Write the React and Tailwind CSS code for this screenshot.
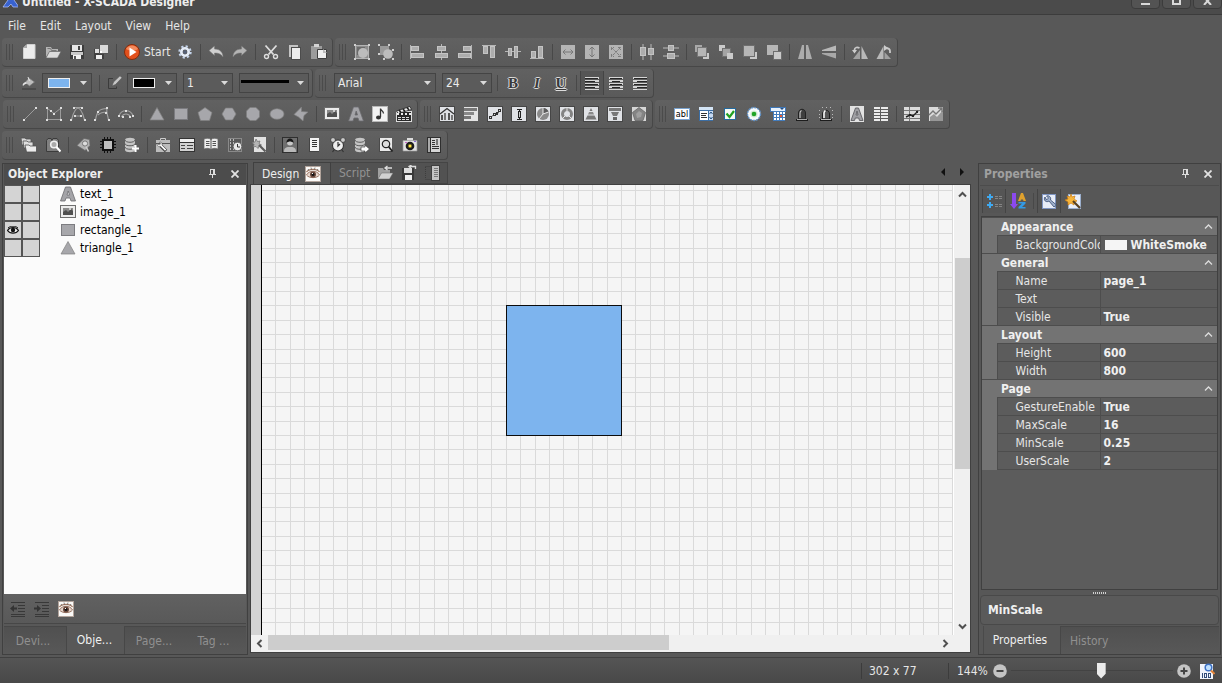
import React from "react";

const R = ({ x, y, w, h, f = "#b6b6b6", s }) => (
  <rect x={x} y={y} width={w} height={h} fill={f} stroke={s} shapeRendering="crispEdges" />
);
const P = ({ d, f = "none", s, w = 1, crisp, dash }) => (
  <path d={d} fill={f} stroke={s} strokeWidth={w} strokeDasharray={dash} shapeRendering={crisp ? "crispEdges" : undefined} />
);
const Dots = ({ pts, f = "#dedede" }) => pts.map(([x, y]) => <R key={x + "-" + y} x={x} y={y} w={2} h={2} f={f} />);
const Block = ({ x, y, w, h }) => (
  <>
    <R x={x} y={y} w={w} h={h} f="#c4c4c4" />
    <R x={x + 1} y={y + 1} w={w - 2} h={h - 2} f="#adadad" />
  </>
);
const Tile = ({ children }) => (
  <>
    <R x={0} y={0} w={16} h={16} f="#464646" />
    <R x={1} y={1} w={14} h={14} f="#e0e2e6" />
    {children}
  </>
);
const G = "#a0a0a0";
const A = "#a7a7ab";

const icons = {
  newFile: <><P d="M6 .5h8v14H2.500V4z" f="#ececec" s="#d0d0d0" /><P d="M6 .5V4H2.500z" f="#a8a8a8" /></>,
  open: <><P d="M1 13V3h5l1 2h6v2H5z" f="#b5b5b5" /><P d="M1 14L4.500 7.500H16L12.500 14z" f="#dcdcdc" s="#666" w={0.6} /><P d="M2.500 4.500h3l1 2h5" s="#777" /></>,
  save: <><R x={1} y={1} w={14} h={14} f="#3c3c3c" /><R x={3} y={1} w={10} h={6} f="#e6e6e6" /><R x={9} y={2} w={2} h={4} f="#444" /><R x={2} y={8} w={12} h={3} f="#c9c9c9" /><R x={4} y={11} w={8} h={4} f="#f2f2f2" /><R x={5} y={12} w={2} h={3} f="#555" /></>,
  saveAll: <><R x={1} y={5} w={10} h={10} f="#404040" /><R x={2} y={5} w={7} h={4} f="#ddd" /><R x={3} y={11} w={6} h={4} f="#eee" /><R x={6} y={1} w={9} h={9} f="#555" /><R x={7} y={1} w={8} h={8} f="#d9d9d9" /><R x={7} y={7} w={2} h={2} f="#fff" /></>,
  start: <><circle cx="8" cy="8" r="7.500" fill="#e2501c" stroke="#842c0c" /><path d="M2 5a7 7 0 0 1 12 0c-3 2-8 2-12 0z" fill="#f38a5d" /><path d="M5.500 3.500v9L12.500 8z" fill="#fff" /></>,
  gear: <><circle cx="8" cy="8" r="5.700" fill="none" stroke="#c4d4ec" strokeWidth="2" strokeDasharray="2.200 2.270" /><circle cx="8" cy="8" r="3.700" fill="none" stroke="#e4ecf8" strokeWidth="2.600" /><circle cx="8" cy="8" r="1.800" fill="#55617a" /></>,
  undo: <P d="M1 6.500L6.500 2v3C12 5 15 8.500 15 13c-2-3-4-4-8.500-4v2.500z" f="#cfcfcf" s="#777" w={0.5} />,
  redo: <P d="M15 6.500L9.500 2v3C4 5 1 8.500 1 13c2-3 4-4 8.500-4v2.500z" f="#b4b4b4" s="#777" w={0.5} />,
  cut: <><P d="M2.500 1.500l8 9M13.500 1.500l-8 9" s="#dedede" w={1.8} /><circle cx="3.500" cy="12.500" r="2" fill="none" stroke="#dedede" strokeWidth="1.400" /><circle cx="12.500" cy="12.500" r="2" fill="none" stroke="#dedede" strokeWidth="1.400" /></>,
  copy: <><R x={2} y={1} w={9} h={12} f="#c4c4c4" /><R x={4} y={3} w={10} h={13} f="#4c4c4c" /><R x={5} y={4} w={8} h={11} f="#ededed" /></>,
  paste: <><R x={0} y={2} w={11} h={13} f="#9c9c9c" /><R x={3} y={0} w={5} h={3} f="#d4d4d4" /><P d="M6.500 5.500h9v9h-9z" f="#efefef" s="#3e3e3e" /><P d="M12 5v4h4z" f="#bbb" /></>,
  group: <><P d="M1.500 1.500h13v13h-13z" f="#8c8c8c" s="#b4b4b4" /><R x={3} y={3} w={8} h={8} f="#6a6a6a" /><circle cx="9" cy="9" r="5" fill="#bcbcbc" /><Dots pts={[[0, 0], [14, 0], [0, 14], [14, 14]]} f="#d0d0d0" /></>,
  ungroup: <><R x={2} y={2} w={9} h={9} f="#9a9a9a" /><circle cx="10" cy="10" r="4.800" fill="#bcbcbc" /><Dots pts={[[0, 0], [10, 0], [0, 9], [5, 14], [14, 5], [14, 14]]} f="#d0d0d0" /></>,
  alL: <><R x={1} y={1} w={1} h={14} /><Block x={2} y={2} w={8} h={5} /><Block x={2} y={9} w={13} h={5} /></>,
  alC: <><R x={8} y={0} w={1} h={16} /><Block x={4} y={2} w={9} h={5} /><Block x={2} y={9} w={13} h={5} /></>,
  alR: <><R x={14} y={1} w={1} h={14} /><Block x={6} y={2} w={8} h={5} /><Block x={1} y={9} w={13} h={5} /></>,
  alT: <><R x={1} y={1} w={14} h={1} /><Block x={2} y={2} w={5} h={8} /><Block x={9} y={2} w={5} h={12} /></>,
  alM: <><R x={0} y={7} w={16} h={1} /><Block x={3} y={4} w={4} h={8} /><Block x={9} y={2} w={4} h={12} /></>,
  alB: <><R x={1} y={14} w={14} h={1} /><Block x={2} y={7} w={5} h={7} /><Block x={9} y={2} w={5} h={12} /></>,
  sameW: <><R x={1} y={1} w={14} h={14} f="#b4b4b4" /><P d="M3 8h10M5.500 5.500L3 8l2.500 2.500M10.500 5.500L13 8l-2.500 2.500" s="#777" /></>,
  sameH: <><R x={1} y={1} w={14} h={14} f="#b4b4b4" /><P d="M8 3v10M5.500 5.500L8 3l2.500 2.500M5.500 10.500L8 13l2.500-2.500" s="#777" /></>,
  sameB: <><R x={1} y={1} w={14} h={14} f="#b4b4b4" /><P d="M3.500 6V3.500H6M10 3.500h2.500V6M3.500 10v2.500H6M10 12.500h2.500V10M3.500 3.500l9 9M12.500 3.500l-9 9" s="#7c7c7c" dash="3 1" /></>,
  distH: <><R x={3} y={0} w={2} h={16} f="#8c8c8c" /><R x={11} y={0} w={2} h={16} f="#8c8c8c" /><Block x={1} y={3} w={6} h={9} /><Block x={9} y={4} w={6} h={7} /></>,
  distV: <><R x={0} y={3} w={16} h={2} f="#8c8c8c" /><R x={0} y={11} w={16} h={2} f="#8c8c8c" /><Block x={5} y={1} w={6} h={6} /><Block x={4} y={9} w={8} h={6} /></>,
  z1: <><R x={1} y={1} w={7} h={7} f="#a8a8a8" /><R x={9} y={9} w={6} h={6} f="#c9c9c9" /><R x={3} y={3} w={9} h={9} s="#777" /></>,
  z2: <><R x={1} y={1} w={6} h={6} f="#cacaca" /><R x={4} y={4} w={8} h={8} f="#a4a4a4" s="#707070" /><R x={9} y={9} w={6} h={6} f="#cacaca" /></>,
  z3: <><R x={8} y={8} w={7} h={7} f="#cacaca" /><R x={1} y={1} w={11} h={11} s="#6e6e6e" /></>,
  z4: <><R x={1} y={1} w={11} h={10} /><R x={7} y={7} w={8} h={8} f="#cacaca" s="#6e6e6e" /></>,
  flipH: <><P d="M7 1v14H1L5 1z" f="#acacac" /><P d="M9 1v14h6L11 1z" f="#acacac" /></>,
  flipV: <><P d="M15 1.500v5.500H1V6z" f="#b8b8b8" /><P d="M15 14.500V9H1v1z" f="#a8a8a8" /></>,
  rotL: <><P d="M8 6v9H1z" f="#a0a0a0" /><P d="M9.500 2v13H16z" f="#b8b8b8" /><P d="M2.500 8V6c0-3 3-3 5-2" s="#c9c9c9" w={1.8} /><P d="M0 6h5L2.500 9.500z" f="#ccc" /></>,
  rotR: <><P d="M7.500 2v13H.5z" f="#b8b8b8" /><P d="M8.500 8v7H15z" f="#a0a0a0" /><P d="M14 9V7c0-3-3-3-5-3" s="#c9c9c9" w={1.8} /><P d="M8 1v6l4-3z" f="#ccc" /></>,
  bucket: <><P d="M8 3l5.500 4-5 4L4 7.500z" f="#bdbdbd" s="#777" w={0.7} /><P d="M4.500 7c-3 1-3 3-2.500 4 1-1 2-2 4-2.500z" f="#e4e4e4" /><P d="M7 2l1.500 4" s="#e4e4e4" /><R x={1} y={13} w={14} h={2} f="#4b4b4b" /></>,
  pen: <><P d="M6 3.500H1.500v10h8v-2" s="#3b3b3b" /><P d="M5 11l1.500-4L13 .8l2 2L8.500 9.500z" f="#c6c6c6" s="#555" w={0.6} /></>,
  line: <><P d="M2 14L14 2" s="#9b9b9b" /><Dots pts={[[1, 13], [13, 1]]} /></>,
  polyline: <><P d="M1.500 2.500v11h13v-11L8 7.500z" s="#9b9b9b" /><Dots pts={[[0, 1], [14, 1], [7, 7], [0, 13], [14, 13], [4, 4]]} /></>,
  curve: <><P d="M1.500 14C3 9 4 3 8 2c4 1 5 7 6.500 12M4 10h8M3 1.500h10" s={G} w={1.2} /><Dots pts={[[0, 13], [14, 13], [3, 1], [11, 1], [4, 9], [10, 9]]} /></>,
  curve2: <><P d="M1.500 14C3 4 6 3 13 2.500 12 6 14 10 14.500 14M4 9c3-3 6-3 9-3" s={G} w={1.2} /><Dots pts={[[0, 13], [14, 13], [12, 1], [3, 5], [11, 6]]} /></>,
  arc: <><P d="M1 10c2-7 12-7 14 0M3.500 11c2-4 7-4 9 0" s={G} w={1.2} /><Dots pts={[[0, 9], [14, 9], [4, 10], [11, 10], [7, 4]]} /></>,
  tri: <P d="M8 1.500L15 14H1z" f={A} s="#808080" w={0.7} />,
  rect: <><R x={1} y={2} w={14} h={12} f="#7c7c80" /><R x={2} y={3} w={12} h={10} f={A} /></>,
  pent: <P d="M8 1.500L15 6.500l-2.500 8h-9L1 6.500z" f={A} s="#808080" w={0.7} />,
  hex: <P d="M4.500 2h7L15 8l-3.500 6h-7L1 8z" f={A} s="#808080" w={0.7} />,
  oct: <P d="M5 1.500h6l3.500 3.500v6L11 14.500H5L1.500 11V5z" f={A} s="#808080" w={0.7} />,
  ell: <ellipse cx="8" cy="8" rx="7" ry="5.300" fill={A} stroke="#808080" strokeWidth="0.700" />,
  freeform: <P d="M1 8.500L8.500 1v4.500L15 6l-4 3.500L10 15 5.500 11z" f={A} s="#808080" w={0.7} />,
  image: <><R x={0} y={1} w={16} h={13} f="#6e6e6e" /><R x={1} y={2} w={14} h={11} f="#ececec" /><R x={3} y={4} w={10} h={7} f="#8a8a8a" /><P d="M3 11V8l3-2 2 2 3-3 2 2v4z" f="#4f4f4f" /><R x={9} y={4} w={2} h={2} f="#ccc" /></>,
  text: <P d="M5.500 1h5l5 14h-4.500l-1-3H6l-1 3H.5zM7 9h2.500L8.200 5z" f="#a4a4a8" s="#6b6b6f" w={0.8} />,
  music: <><R x={0} y={0} w={16} h={16} f="#b8b8b8" /><R x={1} y={1} w={14} h={14} f="#f2f2f2" /><P d="M8.500 11V2.500c0 2 3 2 3 5" s="#333" w={1.3} /><ellipse cx="6.500" cy="11.500" rx="2.500" ry="1.900" fill="#333" /></>,
  movie: <><R x={0} y={5} w={16} h={11} f="#ddd" /><R x={1} y={6} w={14} h={9} f="#292929" /><P d="M.5 5L14 .5l1.500 3L2 7.500z" f="#eee" s="#222" w={0.8} /><P d="M3 4l2 2.500M7 3l2 2.500M11 1.500l2 2.500" s="#222" w={1.6} /><P d="M1 8h14" s="#eee" w={2} dash="2 2" /><P d="M2 11.500h12M2 13.500h12" s="#ddd" dash="3 1" /></>,
  cBar: <Tile><P d="M1 8l7-5.500L15 8" s="#333" w={1.3} /><R x={2} y={9} w={2} h={5} f="#555" /><R x={5} y={7} w={2} h={7} f="#777" /><R x={9} y={7} w={2} h={7} f="#555" /><R x={12} y={9} w={2} h={5} f="#777" /></Tile>,
  cHbar: <><R x={1} y={1} w={14} h={14} f="#e4e4e4" /><R x={1} y={2} w={13} h={3} f="#777" /><R x={1} y={6} w={10} h={3} f="#888" /><R x={1} y={10} w={7} h={3} f="#777" /></>,
  cLine: <Tile><P d="M3.500 11.500L7 8.500h3L13 4" s="#555" /><P d="M2.500 10.500h2v2h-2zM6.500 7.500h2v2h-2zM9.500 6.500h1v2h-1zM11.500 3.500h2v2h-2z" f="#ddd" s="#333" crisp /></Tile>,
  cBox: <Tile><P d="M8.500 3v11M6 3.500h5M6 13.500h5" s="#222" crisp /><R x={7} y={5} w={3} h={7} f="#222" /><R x={8} y={6} w={1} h={5} f="#ccc" /></Tile>,
  cPie: <Tile><circle cx="8" cy="8" r="6" fill="#8a8a8a" /><P d="M8 8V2a6 6 0 0 1 5.500 4z" f="#5c5c5c" /><P d="M8 2v6l5.500-2M8 8l-4 5" s="#e8e8e8" /></Tile>,
  cDonut: <Tile><circle cx="8" cy="8" r="4.500" fill="none" stroke="#838383" strokeWidth="3" /><P d="M8 1v4M3 13l3-3M13 13l-3-3" s="#e8e8e8" /></Tile>,
  cPyr: <Tile><P d="M8 2l1.500 3h-3z" f="#777" /><P d="M6 6h4l1 2.500H5z" f="#8a8a8a" /><P d="M4.500 9.500h7l2 4h-11z" f="#777" /></Tile>,
  cFun: <Tile><R x={2} y={2} w={12} h={3} f="#777" /><P d="M4 6h8l-2 4H6z" f="#777" /><R x={6} y={11} w={4} h={3} f="#666" /></Tile>,
  cRad: <><R x={1} y={1} w={14} h={14} f="#d6d6d6" /><P d="M8 1.500l6.500 5-2.500 8H4l-2.500-8z" f="#858585" s="#666" w={0.8} /><P d="M8 5l3 2-1 4-4 1-1-4z" f="#a0a0a0" /></>,
  combo: <><R x={1} y={1} w={14} h={14} f="#3c6ea4" /><R x={1} y={1} w={14} h={3} f="#d4e5f6" /><R x={2} y={5} w={8} h={9} f="#fff" /><R x={3} y={7} w={6} h={1} f="#333" /><R x={3} y={9} w={5} h={1} f="#333" /><R x={3} y={11} w={6} h={1} f="#333" /><R x={11} y={5} w={4} h={9} f="#c8dbf4" /><P d="M11.500 8L13 6l1.500 2M11.500 11l1.500 2 1.500-2" s="#24507e" /></>,
  check: <><R x={2} y={2} w={12} h={12} f="#246a9f" /><R x={3} y={3} w={10} h={10} f="#f7faf5" /><P d="M4.500 7.500l3 3.500 4.500-6" s="#21a121" w={2.2} /></>,
  radio: <><circle cx="8" cy="8" r="6.500" fill="#f7fbff" stroke="#5f8fc2" strokeDasharray="2 1" strokeWidth="1.400" /><circle cx="8" cy="8" r="3.600" fill="#d2ecd2" /><circle cx="8" cy="8" r="2.300" fill="#1fa528" /></>,
  date: <><R x={0} y={1} w={15} h={4} f="#e7f1fd" s="#3f77b7" /><P d="M10 2h4l-2 2z" f="#274e80" /><R x={3} y={5} w={12} h={10} f="#447dbd" /><g>{[6, 9, 12].map((y) => [4, 7, 10, 13].map((x) => <R key={x + "," + y} x={x} y={y} w={2} h={2} f={x === 10 && y === 9 ? "#e95a33" : "#fff"} />))}</g></>,
  lamp: <><P d="M4.500 13V7c0-5 7-5 7 0v6z" f="#3f3f3f" s="#222" /><P d="M6 12V7c0-1 .5-2 1.500-2.500" s="#ccc" w={1.1} /><R x={2} y={13} w={12} h={2} f="#1d1d1d" /><R x={3} y={13} w={10} h={1} f="#aaa" /></>,
  lampOn: <><P d="M4.500 13V8c0-5 7-5 7 0v5z" f="#555" s="#1d1d1d" /><P d="M6 12V7c0-1 .5-2 1.500-2.500" s="#fff" w={1.5} /><R x={2} y={13} w={12} h={2} f="#1d1d1d" /><R x={3} y={13} w={10} h={1} f="#bbb" /><P d="M1 4h1M1 8h1M1 11h1M14 4h1M14 8h1M14 11h1M4 1h1M8 1h1M12 1h1" s="#bbb" crisp /></>,
  textTile: <><R x={1} y={0} w={14} h={16} f="#e2e2e2" /><P d="M6.500 2h3L14 14.500h-3.500L9.700 12H6.300l-.8 2.500H2zM7 9h2L8 5z" f="#a0a0a4" s="#5f5f63" w={0.9} /></>,
  grid: <g>{[1, 4, 7, 10, 13].map((y) => <g key={y}><R x={1} y={y} w={6} h={2} f="#ececec" /><R x={8} y={y} w={7} h={2} f="#ececec" /></g>)}</g>,
  trendGrid: <><R x={0} y={1} w={16} h={14} f="#dcdcdc" /><P d="M0 4.500h16M0 8.500h16M0 12.500h16M5.500 1v14" s="#777" crisp /><P d="M2 11l4-2 3 1 5-5" s="#222" w={1.4} /><Dots pts={[[5, 8], [8, 9], [12, 5]]} f="#222" /></>,
  trend: <><R x={1} y={1} w={14} h={14} f="#dcdcdc" /><P d="M2 15v-4l4-3 3 3 6-7v11z" f="#979797" /><P d="M1 9l4-4 3 3 6-6M10 2h4v4" s="#777" w={1.4} /></>,
  layers: <><P d="M0 1h4l1 1h5v6H1z" f="#d8d8d8" s="#505050" w={0.8} /><P d="M2 4h4l1 1h5v6H3z" f="#dedede" s="#505050" w={0.8} /><P d="M4 8h4l1 1h6.500v6H5.500z" f="#ececec" s="#505050" w={0.8} /></>,
  findObj: <><P d="M1.500 14.500v-11L3 1.500h3l1 2 1-2h4l1.500 2v11z" f="#808080" s="#3c3c3c" /><circle cx="9" cy="7.500" r="3.300" fill="#aaa" stroke="#f0f0f0" strokeWidth="1.600" /><P d="M11.500 10l4 4.500" s="#fff" w={2.2} /></>,
  tag: <><P d="M1 8.500L8 1.500l5.500 1 .5 6-5 5z" f="#b3b3b3" s="#666" w={0.7} /><circle cx="9" cy="6.500" r="2.600" fill="#dcdcdc" stroke="#777" /><P d="M10 9.500l2.500 5" s="#ccc" w={1.6} /></>,
  chip: <><P d="M4.500 0v16M7.500 0v16M10.500 0v16M0 4.500h16M0 7.500h16M0 10.500h16" s="#111" crisp /><R x={2} y={2} w={12} h={12} f="#111" /><R x={4} y={4} w={8} h={8} f="#bfbfbf" /></>,
  dbAdd: <><P d="M1 3c0-3 10-3 10 0v10c0 3-10 3-10 0z" f="#c5c5c5" /><P d="M1 3c0 3 10 3 10 0M1 6.500c0 3 10 3 10 0M1 10c0 3 10 3 10 0" s="#5c5c5c" /><P d="M8 11.500h7M11.500 8v7" s="#fff" w={2} /></>,
  toolbox: <><P d="M5.500 3.500v-2h5v2" s="#ccc" /><R x={1} y={3} w={14} h={12} f="#bcbcbc" /><R x={1} y={6} w={14} h={1} f="#555" /><P d="M5 8l6 6" s="#444" w={3.4} /><P d="M2 6.500c0 3 2 3.500 3.500 3L10 14l1.500-1.500L7 8c.5-2-.5-3-2.500-3l1 2L4 8z" f="#f4f4f4" s="#444" w={0.5} /></>,
  form: <><R x={0} y={1} w={16} h={14} f="#333" /><R x={1} y={2} w={14} h={3} f="#eee" /><R x={1} y={6} w={14} h={8} f="#d2d2d2" /><P d="M2 8.500h4M2 11.500h4M8 8.500h6M8 11.500h6" s="#444" crisp /></>,
  book: <><P d="M1 2c3-1 5-1 7 .5C10 1 12 1 15 2v10c-3-1-5-1-7 .5C6 11 4 11 1 12z" f="#eee" s="#666" w={0.7} /><P d="M8 2v11M3 4.500h3.500M3 6.500h3.500M3 8.500h3.500M9.500 4.500H13M9.500 6.500H13M9.500 8.500H13" s="#555" /></>,
  schedule: <><R x={1} y={1} w={14} h={14} f="#8a8a8a" /><R x={2} y={2} w={12} h={12} f="#5a5a5a" /><P d="M3.500 2v12M6.500 2v12" s="#bbb" dash="2 1" /><circle cx="10.500" cy="9.500" r="4.300" fill="#eaeaea" stroke="#666" /><P d="M10.500 7v3h2.500" s="#333" /></>,
  script: <><R x={3} y={0} w={12} h={15} f="#e2e2e2" /><P d="M5 2l1.500 2.500L9 4 8 6.500l2.500 1.500-2.500 1L7 11.500 5 9.500 2 10l1-2.500L1 5.500 4 5z" f="#b4b4b4" s="#6a6a6a" w={0.7} /><P d="M8 8l6.500 6.500" s="#5c5c5c" w={2.2} /></>,
  user: <><R x={0} y={0} w={16} h={16} f="#2f2f2f" /><R x={1} y={1} w={14} h={14} f="#6f6f6f" /><circle cx="8" cy="5.500" r="3" fill="#c9c9c9" /><P d="M4.500 6c-.5-6 7.500-6 7 0-2-2-5-2-7 0z" f="#161616" /><P d="M2 15c0-5 3-5 6-5s6 0 6 5z" f="#b9b9b9" /></>,
  log: <><R x={3} y={1} w={10} h={14} f="#444" /><R x={4} y={1} w={9} h={13} f="#f2f2f2" /><P d="M6 3.500h5M6 5.500h5M6 7.500h5M6 9.500h5" s="#333" crisp /></>,
  alarm: <><circle cx="8" cy="8.500" r="5.500" fill="#eee" stroke="#333" strokeWidth="1.100" /><circle cx="3" cy="3" r="2.400" fill="#ccc" stroke="#333" strokeWidth="0.700" /><circle cx="13" cy="3" r="2.400" fill="#ccc" stroke="#333" strokeWidth="0.700" /><P d="M8 5v4l2-2M4 13l-1.500 2M12 13l1.500 2" s="#333" w={1.2} /></>,
  dbOut: <><P d="M1 3c0-3 10-3 10 0v10c0 3-10 3-10 0z" f="#c5c5c5" /><P d="M1 3c0 3 10 3 10 0M1 6.500c0 3 10 3 10 0M1 10c0 3 10 3 10 0" s="#5c5c5c" /><P d="M7 10h4V8l4.500 4L11 16v-2H7z" f="#fff" s="#444" w={0.7} /></>,
  preview: <><R x={1} y={1} w={13} h={14} f="#4a4a4a" /><R x={2} y={1} w={12} h={13} f="#e9e9e9" /><circle cx="8" cy="7" r="3.700" fill="#ddd" stroke="#222" strokeWidth="1.200" /><P d="M10.500 9.500L14.500 14.500" s="#222" w={1.8} /></>,
  camera: <><R x={5} y={1} w={6} h={3} f="#ddd" /><P d="M1 3.500h14v10.500H1z" f="#e3e3e3" s="#999" w={0.7} /><circle cx="8" cy="9" r="4.300" fill="#1c1c1c" /><circle cx="8" cy="9" r="2" fill="#9b8a26" /><R x={7} y={8} w={2} h={2} f="#ffe844" /><R x={3} y={5} w={2} h={1} f="#c565c9" /><R x={12} y={4} w={2} h={1} f="#8a6ad0" /></>,
  report: <><R x={1} y={0} w={14} h={16} f="#2f2f2f" /><R x={2} y={1} w={2} h={14} f="#aaa" /><R x={5} y={1} w={9} h={14} f="#d5d5d5" /><P d="M6 3.500h3M6 5.500h3M6 7.500h3M6 9.500h7M6 11.500h7" s="#333" crisp /><R x={10} y={2} w={2} h={6} f="#777" /></>,
  eye: <><R x={0} y={0} w={16} h={16} f="#b2a49c" /><R x={1} y={1} w={14} h={14} f="#fbfaf8" /><P d="M1.500 6C4 2.500 12 2.500 14.500 6" s="#a07863" w={1.3} /><P d="M1.500 9C4 4 12 4 14.500 9 12 12.500 4 12.500 1.500 9z" f="#e5d6cd" s="#9a7564" /><circle cx="8" cy="8.500" r="3" fill="#6a4a3e" /><circle cx="8" cy="8.500" r="1.500" fill="#141414" /><R x={7} y={7} w={1} h={1} f="#fff" /><P d="M3 3l1 1.500M6 1.500l.5 2M10 1.500l-.5 2M13 3l-1 1.500" s="#555" w={0.7} /></>,
  importI: <><P d="M1 14V3h5l1 2h6v3H5z" f="#a0a0a0" /><P d="M1 14l3.500-6H16l-3.500 6z" f="#d2d2d2" s="#666" w={0.5} /><P d="M15 3H8M10.500 1L8 3l2.500 2" s="#ddd" w={1.3} /></>,
  exportI: <><R x={1} y={3} w={12} h={12} f="#383838" /><R x={3} y={3} w={8} h={5} f="#ddd" /><R x={4} y={10} w={7} h={5} f="#eee" /><P d="M14.500 4V1.500H8M10.500 0L8 1.500 10.500 4" s="#ddd" w={1.3} /></>,
  listing: <><P d="M.5 1.500h5M.5 14.500h5M.5 2v12" s="#3d3d3d" dash="1 1" /><R x={6} y={0} w={9} h={16} f="#3f3f3f" /><R x={7} y={1} w={7} h={14} f="#c4c4c4" /><P d="M9 3.500h4M9 5.500h4M9 7.500h4M9 9.500h4M9 11.500h4" s="#777" crisp /></>,
  outdent: <><P d="M1 1.500h14M1 13.500h14M1 15.500h14M8 4.500h7M8 7.500h7M8 10.500h7" s="#383838" crisp /><P d="M0 7.500L4 4v2.500h3v2H4V11z" f="#333" /></>,
  indent: <><P d="M1 1.500h14M1 13.500h14M1 15.500h14M8 4.500h7M8 7.500h7M8 10.500h7" s="#383838" crisp /><P d="M7 7.500L3 4v2.500H0v2h3V11z" f="#333" /></>,
  categ: <><P d="M1 4h6M4 1v6M1 12h6M4 9v6" s="#3fa9f0" w={2} /><P d="M9 3.500h3M13 3.500h3M9 5.500h3M13 5.500h3M9 11.500h3M13 11.500h3M9 13.500h3M13 13.500h3" s="#858585" crisp /></>,
  sortAZ: <><P d="M2 0h4v11h2l-4 5-4-5h2z" f="#8b49ef" /><P d="M11 0h2l3 8h-2.500l-.5-1.500h-2L10.500 8H8z" f="#dfa12d" /><P d="M8.500 9h7v1.500L12 14h3.500v1.500h-7V14l3.500-3.500H8.500z" f="#339ae4" /></>,
  wrench: <><R x={1} y={1} w={13} h={14} f="#e8edf8" s="#7f95c2" /><P d="M4 4c-2 3 1 6 4 4l5 6 2.500-2-6-5c1-3-2-5-4-4l2 2-2 2z" f="#9fb0cc" s="#34496f" w={0.8} /></>,
  wand: <><R x={3} y={1} w={12} h={14} f="#e9eef8" s="#9bafcd" /><P d="M6 1l1 3 3-1-1 3 3 2-3 1v3l-3-2-3 2V9L0 7l3-1-1-3 3 1z" f="#f7b53a" s="#cb7d11" w={0.7} /><P d="M8 8l7 7" s="#584122" w={2.2} /></>,
  zoom100: <><R x={1} y={1} w={13} h={15} f="#f0f4fc" /><circle cx="9.500" cy="4.500" r="3.300" fill="#bfe0ff" stroke="#3f73c5" strokeWidth="1.500" /><P d="M12 7.500l3.500 3.500" s="#e28339" w={2} /><P d="M3.500 10v5M5.500 10.500h2v4h-2zM9.500 10.500h2v4h-2z" s="#314c79" crisp /></>,
  logo: <P d="M2 0l4 6-5 7h5l3-3 2 3h6l-5-7 3-6z" f="#3862cf" s="#b9c9ff" w={0.7} />,
};

const Icon = ({ n }) => (
  <svg className="size-4 shrink-0" viewBox="0 0 16 16" aria-hidden="true">{icons[n]}</svg>
);

const T = ({ n, label, pressed, children }) => (
  <button
    aria-label={label}
    className={
      "flex h-6 w-6 shrink-0 items-center justify-center " +
      (pressed ? "border-x border-[#444] bg-[#555]" : "")
    }
  >
    {children || <Icon n={n} />}
  </button>
);
const Sep = () => (
  <div className="flex w-[7px] shrink-0 justify-center">
    <div className="h-4 w-px bg-[#484848]" />
  </div>
);
const Bar = ({ children, label }) => (
  <div role="toolbar" aria-label={label} className="flex h-[29px] shrink-0 items-center rounded-sm border-b border-r border-[#474747] bg-linear-to-b from-[#616161] to-[#5a5a5a] pr-px">
    <div className="flex w-[15px] shrink-0 items-center gap-0.5 pl-1">
      <div className="h-4 w-px bg-[#4b4b4b]" />
      <div className="h-4 w-px bg-[#4b4b4b]" />
      <div className="h-4 w-px bg-[#4b4b4b]" />
    </div>
    {children}
  </div>
);
const items = (list) => list.map((n, i) => (n === "|" ? <Sep key={i} /> : <T key={i} n={n} label={n} />));

const Drop = ({ label, value, className, children }) => (
  <label className={"relative flex h-5 shrink-0 items-center border border-[#444] bg-[#5b5b5b] " + className}>
    <select aria-label={label} defaultValue={value} className="h-full w-full appearance-none bg-transparent pl-[3px] leading-[18px] text-[#ececec] outline-none">
      <option value={value}>{children ? "" : value}</option>
    </select>
    {children && <span className="pointer-events-none absolute left-[5px] flex items-center">{children}</span>}
    <svg className="pointer-events-none absolute right-1 h-1 w-[7px]" viewBox="0 0 7 4"><path d="M0 0h7L3.500 4z" fill="#dadada" /></svg>
  </label>
);

const Letter = ({ c, cls }) => (
  <span className={"font-['Liberation_Serif',serif] text-[15px] leading-4 font-bold text-[#3a3a3a] [text-shadow:1px_0_#ddd,-1px_0_#ddd,0_1px_#ddd,0_-1px_#ddd] " + cls}>{c}</span>
);
const Lines = ({ rows }) => (
  <svg className="h-4 w-4" viewBox="0 0 16 16" aria-hidden="true">
    {rows.map(([x, w], i) => (
      <g key={i}><R x={1} y={2 + i * 3} w={14} h={2} f="#d6d6d6" /><R x={x} y={3 + i * 3} w={w} h={1} f="#262626" /></g>
    ))}
    <R x={1} y={14} w={14} h={1} f="#d6d6d6" />
  </svg>
);

const PanelHead = ({ title, dim }) => (
  <div className={"flex h-[21px] shrink-0 items-center justify-between pr-px pb-0.5 pl-1 font-bold " + (dim ? "text-[#a0a0a0]" : "bg-[#4c4c4c] text-[#eee]")}>
    <h2>{title}</h2>
    <div className="flex gap-[3px] text-[#dedede]">
      <button aria-label="Pin" className="flex h-4 w-5 items-center justify-center">
        <svg className="h-[9px] w-[7px]" viewBox="0 0 7 9"><P d="M1.500 0v5M0 5.500h7M1 .5h4M3.500 6v3" s="#ddd" crisp /><R x={4} y={0} w={2} h={5} f="#ddd" /></svg>
      </button>
      <button aria-label="Close" className="flex h-4 w-5 items-center justify-center">
        <svg className="size-2" viewBox="0 0 8 8"><P d="M.5.5l7 7M7.500.5l-7 7" s="#e2e2e2" w={1.8} /></svg>
      </button>
    </div>
  </div>
);

const objects = [
  ["text", "text_1"],
  ["image", "image_1"],
  ["rect", "rectangle_1", true],
  ["tri", "triangle_1"],
];

const groups = [
  ["Appearance", [["BackgroundColor", "WhiteSmoke", true]]],
  ["General", [["Name", "page_1"], ["Text", ""], ["Visible", "True"]]],
  ["Layout", [["Height", "600"], ["Width", "800"]]],
  ["Page", [["GestureEnable", "True"], ["MaxScale", "16"], ["MinScale", "0.25"], ["UserScale", "2"]]],
];

const Chevron = ({ d }) => (
  <svg className="size-[9px]" viewBox="0 0 9 9" aria-hidden="true"><path d={d} fill="none" stroke="#505050" strokeWidth="2" /></svg>
);

const idleTab = "border-t border-[#474747] bg-linear-to-b from-[#505050] to-[#585858] ";

function ObjectExplorer() {
  return (
    <section className="flex w-[246px] shrink-0 flex-col border border-[#404040] px-px">
      <PanelHead title="Object Explorer" />
      <div className="min-h-0 grow bg-[#fbfbfb]">
        <ul className="text-black">
          {objects.map(([icon, name, seen]) => (
            <li key={name} className="flex h-[18px] items-center">
              <button aria-label={"Show " + name} className="flex h-[18px] w-[18px] items-center justify-center border border-[#555] bg-[#d4d4d4]">
                {seen && (
                  <svg className="h-2 w-3" viewBox="0 0 12 8"><P d="M.5 4.500C3 .5 9 .5 11.500 4.500 9 8 3 8 .5 4.500z" f="#eee" s="#111" w={1.2} /><circle cx="6" cy="4" r="2.200" fill="#111" /><P d="M1 2C4-.5 8-.5 11 2" s="#111" /></svg>
                )}
              </button>
              <button aria-label={"Lock " + name} className="h-[18px] w-[18px] border border-[#555] bg-[#d4d4d4]" />
              <span className="ml-5 flex items-center gap-1"><Icon n={icon} />{name}</span>
            </li>
          ))}
        </ul>
      </div>
      <div className="flex h-[30px] shrink-0 items-center border-b border-[#474747] bg-linear-to-b from-[#616161] to-[#595959] pl-0.5">
        <T n="outdent" label="Outdent" /><T n="indent" label="Indent" /><T n="eye" label="Preview" />
      </div>
      <div role="tablist" className="flex h-[30px] shrink-0 pt-0.5 text-[#909090]">
        <button role="tab" className={idleTab + "w-[63px] border-r pr-1"}>Devi...</button>
        <button role="tab" aria-selected="true" className="w-[57px] pr-0.5 text-[#f2f2f2]">Obje...</button>
        <button role="tab" className={idleTab + "w-[61px] border-l pr-0.5"}>Page...</button>
        <button role="tab" className={idleTab + "grow pr-1"}>Tag ...</button>
      </div>
    </section>
  );
}

function Canvas() {
  return (
    <section className="flex min-w-0 grow flex-col">
      <div className="flex h-[22px] shrink-0 items-stretch pl-[3px]">
        <div className="flex w-[78px] items-center gap-1.5 border border-b-0 border-[#404040] pl-2">
          <button className="text-[#eee]">Design</button><Icon n="eye" />
        </div>
        <div className="flex w-[117px] items-center border border-l-0 border-[#454545] bg-[#525252] pl-2">
          <button className="mr-[3px] text-[#929292]">Script</button>
          <T n="importI" label="Import script" /><T n="exportI" label="Export script" /><T n="listing" label="Listing" />
        </div>
        <div className="ml-auto flex items-center gap-[15px] pr-[7px] pb-0.5">
          <button aria-label="Previous tab"><svg className="block h-2 w-1" viewBox="0 0 4 8"><path d="M4 0v8L0 4z" fill="#111" /></svg></button>
          <button aria-label="Next tab"><svg className="block h-2 w-1" viewBox="0 0 4 8"><path d="M0 0v8l4-4z" fill="#111" /></svg></button>
        </div>
      </div>
      <div className="flex min-h-0 grow flex-col border border-[#404040] bg-[#f0f0f0]">
        <div className="flex min-h-0 grow">
          <div className="w-2.5 shrink-0 bg-[#d3d3d3]" />
          <div className="min-w-0 grow border-r border-l border-r-white border-l-black bg-[#f5f5f5]">
            <svg className="block h-full w-full" shapeRendering="crispEdges">
              <defs>
                <pattern id="grid" x="-1" y="5" width="72" height="72" patternUnits="userSpaceOnUse">
                  <path d="M.5 0v72M14.500 0v72M29.500 0v72M43.500 0v72M58.500 0v72M0 .5h72M0 15.500h72M0 29.500h72M0 43.500h72M0 58.500h72" stroke="#dadada" />
                </pattern>
              </defs>
              <rect width="100%" height="100%" fill="url(#grid)" />
              <rect x="244.500" y="120.500" width="115" height="130" fill="#7db4ee" stroke="#0c0c0c" />
            </svg>
          </div>
          <div className="flex w-4 shrink-0 flex-col items-center">
            <button aria-label="Scroll up" className="flex h-[18px] w-full items-center justify-center"><Chevron d="M1 6.500L4.500 3 8 6.500" /></button>
            <div className="grow-[55]" />
            <div className="w-[15px] grow-[212] bg-[#cdcdcd]" />
            <div className="grow-[148]" />
            <button aria-label="Scroll down" className="flex h-[18px] w-full items-center justify-center"><Chevron d="M1 2.500L4.500 6 8 2.500" /></button>
          </div>
        </div>
        <div className="flex h-[17px] shrink-0 items-start pr-4">
          <button aria-label="Scroll left" className="flex h-4 w-[17px] items-center justify-center"><Chevron d="M6.500 1L3 4.500 6.500 8" /></button>
          <div className="h-[15px] grow-[401] bg-[#cdcdcd]" />
          <div className="grow-[268]" />
          <button aria-label="Scroll right" className="flex h-4 w-[17px] items-center justify-center"><Chevron d="M2.500 1L6 4.500 2.500 8" /></button>
        </div>
      </div>
    </section>
  );
}

function Properties() {
  return (
    <section className="flex w-[243px] shrink-0 flex-col border border-[#404040] bg-[#575757] px-px">
      <PanelHead title="Properties" dim />
      <div className="flex h-[31px] shrink-0 items-center border-t border-[#4c4c4c] pl-0.5">
        <T n="categ" label="Categorized" pressed /><T n="sortAZ" label="Alphabetical" /><Sep /><T n="wrench" label="Properties" pressed /><T n="wand" label="Events" />
      </div>
      <div className="mx-px flex min-h-0 grow flex-col border border-[#404040] bg-[#5c5c5c]">
        <table className="w-full table-fixed border-collapse">
          <colgroup><col className="w-[15px]" /><col className="w-[103px]" /><col /></colgroup>
          {groups.map(([title, rows]) => (
            <tbody key={title}>
              <tr className="h-[18px] bg-[#737373]">
                <td className="border-t border-[#4d4d4d] p-0" />
                <th colSpan={2} className="border-t border-b border-[#4d4d4d] p-0 pr-1 pl-1 text-left font-bold text-[#f0f0f0]">
                  <div className="flex h-4 items-center justify-between leading-4">
                    {title}
                    <svg className="h-[5px] w-[9px]" viewBox="0 0 9 5" aria-hidden="true"><path d="M1 4.500l3.500-3.500L8 4.500" fill="none" stroke="#ddd" strokeWidth="1.300" /></svg>
                  </div>
                </th>
              </tr>
              {rows.map(([name, value, swatch]) => (
                <tr key={name} className="h-[18px]">
                  <td className="border-r border-[#4d4d4d] bg-[#737373] p-0" />
                  <th className="overflow-hidden border-r border-b border-[#4d4d4d] p-0 pl-[18px] text-left leading-4 font-normal whitespace-nowrap text-[#e6e6e6]">{name}</th>
                  <td className="border-b border-[#4d4d4d] p-0 pl-[3px] leading-4 font-bold text-[#f0f0f0]">
                    <span className="flex items-center gap-1 whitespace-nowrap">{swatch && <span className="ml-px h-2.5 w-[22px] shrink-0 bg-[#f5f5f5]" />}{value}</span>
                  </td>
                </tr>
              ))}
            </tbody>
          ))}
        </table>
      </div>
      <div className="flex h-[5px] shrink-0 items-center justify-center gap-px">
        {[0, 1, 2, 3, 4, 5, 6].map((i) => <div key={i} className="h-0.5 w-px bg-[#d0d0d0]" />)}
      </div>
      <div className="flex h-[30px] shrink-0 items-center rounded-sm border border-[#494949] bg-[#5a5a5a] pl-[7px] font-bold text-[#f0f0f0]">MinScale</div>
      <div role="tablist" className="flex h-[29px] shrink-0 pt-px pl-[3px] text-[#909090]">
        <button role="tab" aria-selected="true" className="w-[77px] border-l border-[#4a4a4a] pr-1 text-[#eee]">Properties</button>
        <button role="tab" className={idleTab + "grow border-l pl-[9px] text-left"}>History</button>
      </div>
    </section>
  );
}

export default function App() {
  return (
    <div className="flex h-screen flex-col overflow-hidden bg-[#585858] font-['DejaVu_Sans_Condensed','DejaVu_Sans',sans-serif] text-xs text-[#e6e6e6]">
      <header className="flex h-[15px] shrink-0 items-end justify-between overflow-hidden border-b border-[#3c3c3c] bg-[#4b4b4b]">
        <div className="flex items-end gap-1 pb-1 pl-0.5">
          <Icon n="logo" />
          <h1 className="text-xs leading-4 font-bold text-[#eee]">Untitled - X-SCADA Designer</h1>
        </div>
        <div className="flex gap-0.5 pb-[5px]">
          {[["Minimize", "M1 8h9"], ["Maximize", "M2 1h7v7h-7z"], ["Close", "M2 1l7 8M9 1l-7 8"]].map(([l, d]) => (
            <button key={l} aria-label={l} className="flex h-4 w-[29px] items-end justify-center rounded-sm border border-[#3c3c3c] bg-[#535353] pb-[3px]">
              <svg className="h-[9px] w-[11px]" viewBox="0 0 11 9"><path d={d} fill="none" stroke="#d9d9d9" strokeWidth="2" /></svg>
            </button>
          ))}
        </div>
      </header>

      <nav className="flex h-[23px] shrink-0 items-center gap-[14px] pb-0.5 pl-2">
        {["File", "Edit", "Layout", "View", "Help"].map((m) => <button key={m}>{m}</button>)}
      </nav>

      <div className="flex shrink-0 flex-col gap-0.5 pl-0.5">
        <div className="flex gap-0.5">
          <Bar label="Standard">
            {items(["newFile", "open", "save", "saveAll", "|"])}
            <button className="flex h-6 items-center gap-1 pr-[3px] pl-1"><Icon n="start" />Start</button>
            {items(["gear", "|", "undo", "redo", "|", "cut", "copy", "paste"])}
          </Bar>
          <Bar label="Arrange">
            {items(["group", "ungroup", "|", "alL", "alC", "alR", "alT", "alM", "alB", "|", "sameW", "sameH", "sameB", "|", "distH", "distV", "|", "z1", "z2", "z3", "z4", "|", "flipH", "flipV", "|", "rotL", "rotR"])}
          </Bar>
        </div>
        <div className="flex gap-0.5">
          <Bar label="Fill and line">
            <T n="bucket" label="Fill" />
            <Drop label="Fill colour" value="#7db4ee" className="ml-px w-[50px]"><span className="h-2.5 w-[22px] border border-[#eee] bg-[#7db4ee]" /></Drop>
            <div className="w-1" /><Sep />
            <T n="pen" label="Line" />
            <Drop label="Line colour" value="#000000" className="w-[50px]"><span className="h-2.5 w-[22px] border border-[#eee] bg-black" /></Drop>
            <Drop label="Line width" value="1" className="ml-1.5 w-[50px]" />
            <Drop label="Line style" value="Solid" className="mr-0.5 ml-1.5 w-[70px]"><span className="mb-1 -ml-1 h-[3px] w-12 bg-black" /></Drop>
          </Bar>
          <Bar label="Font">
            <div className="w-1" />
            <Drop label="Font" value="Arial" className="w-[102px]" />
            <Drop label="Font size" value="24" className="ml-1.5 w-[50px]" />
            <div className="w-0.5" /><Sep />
            <T label="Bold"><Letter c="B" cls="" /></T>
            <T label="Italic"><Letter c="I" cls="italic" /></T>
            <T label="Underline"><Letter c="U" cls="underline" /></T>
            <Sep />
            <T label="Align left" pressed><Lines rows={[[1, 13], [1, 10], [1, 13], [1, 10]]} /></T>
            <T label="Align center"><Lines rows={[[2, 12], [4, 8], [2, 12], [4, 8]]} /></T>
            <T label="Align right"><Lines rows={[[2, 13], [5, 10], [2, 13], [5, 10]]} /></T>
          </Bar>
        </div>
        <div className="flex gap-0.5 pl-px">
          <Bar label="Shapes">
            {items(["line", "polyline", "curve", "curve2", "arc", "|", "tri", "rect", "pent", "hex", "oct", "ell", "freeform", "|", "image", "text", "music", "movie"])}
          </Bar>
          <Bar label="Charts">
            {items(["cBar", "cHbar", "cLine", "cBox", "cPie", "cDonut", "cPyr", "cFun", "cRad"])}
          </Bar>
          <Bar label="Controls">
            <T label="Text box"><span className="flex h-3 w-4 items-center justify-center border border-[#7aa3cf] bg-white text-[9px] leading-[10px] text-black">abl</span></T>
            {items(["combo", "check", "radio", "date", "lamp", "lampOn", "|", "textTile", "grid", "|", "trendGrid", "trend"])}
          </Bar>
        </div>
        <div className="flex">
          <Bar label="Project">
            {items(["layers", "findObj", "|", "tag", "chip", "dbAdd", "|", "toolbox", "form", "book", "schedule", "script", "|", "user", "log", "alarm", "dbOut", "preview", "camera", "report"])}
          </Bar>
        </div>
      </div>

      <main className="flex min-h-0 grow pt-[3px] pr-px pb-0.5 pl-0.5">
        <ObjectExplorer />
        <div className="-mt-px flex min-w-0 grow pr-[7px] pb-0.5 pl-0.5"><Canvas /></div>
        <Properties />
      </main>

      <footer className="flex h-[26px] shrink-0 items-center justify-end border-t border-[#404040] bg-linear-to-b from-[#555] to-[#484848] pr-[7px]">
        <div className="flex h-4 w-[87px] items-center border-l border-[#3c3c3c] pl-[7px]">302 x 77</div>
        <div className="flex h-4 items-center border-l border-[#3c3c3c] pl-2">
          <span className="w-9">144%</span>
          <button aria-label="Zoom out">
            <svg className="block size-3.5" viewBox="0 0 14 14"><circle cx="7" cy="7" r="6.800" fill="#c4c4c4" /><path d="M3.500 7h7" stroke="#444" strokeWidth="2" /></svg>
          </button>
        </div>
        <input
          type="range" min="0" max="100" defaultValue="56" aria-label="Zoom"
          className="mx-1 h-4 w-[162px] appearance-none bg-[linear-gradient(#434343,#434343)] bg-[length:100%_1px] bg-center bg-no-repeat [&::-webkit-slider-thumb]:h-4 [&::-webkit-slider-thumb]:w-[9px] [&::-webkit-slider-thumb]:appearance-none [&::-webkit-slider-thumb]:bg-[#ececec] [&::-webkit-slider-thumb]:[clip-path:polygon(0_0,100%_0,100%_70%,50%_100%,0_70%)]"
        />
        <button aria-label="Zoom in">
          <svg className="block size-3.5" viewBox="0 0 14 14"><circle cx="7" cy="7" r="6.800" fill="#c4c4c4" /><path d="M3.500 7h7M7 3.500v7" stroke="#444" strokeWidth="2" /></svg>
        </button>
        <button aria-label="Zoom to 100 percent" className="ml-2"><Icon n="zoom100" /></button>
      </footer>
    </div>
  );
}
